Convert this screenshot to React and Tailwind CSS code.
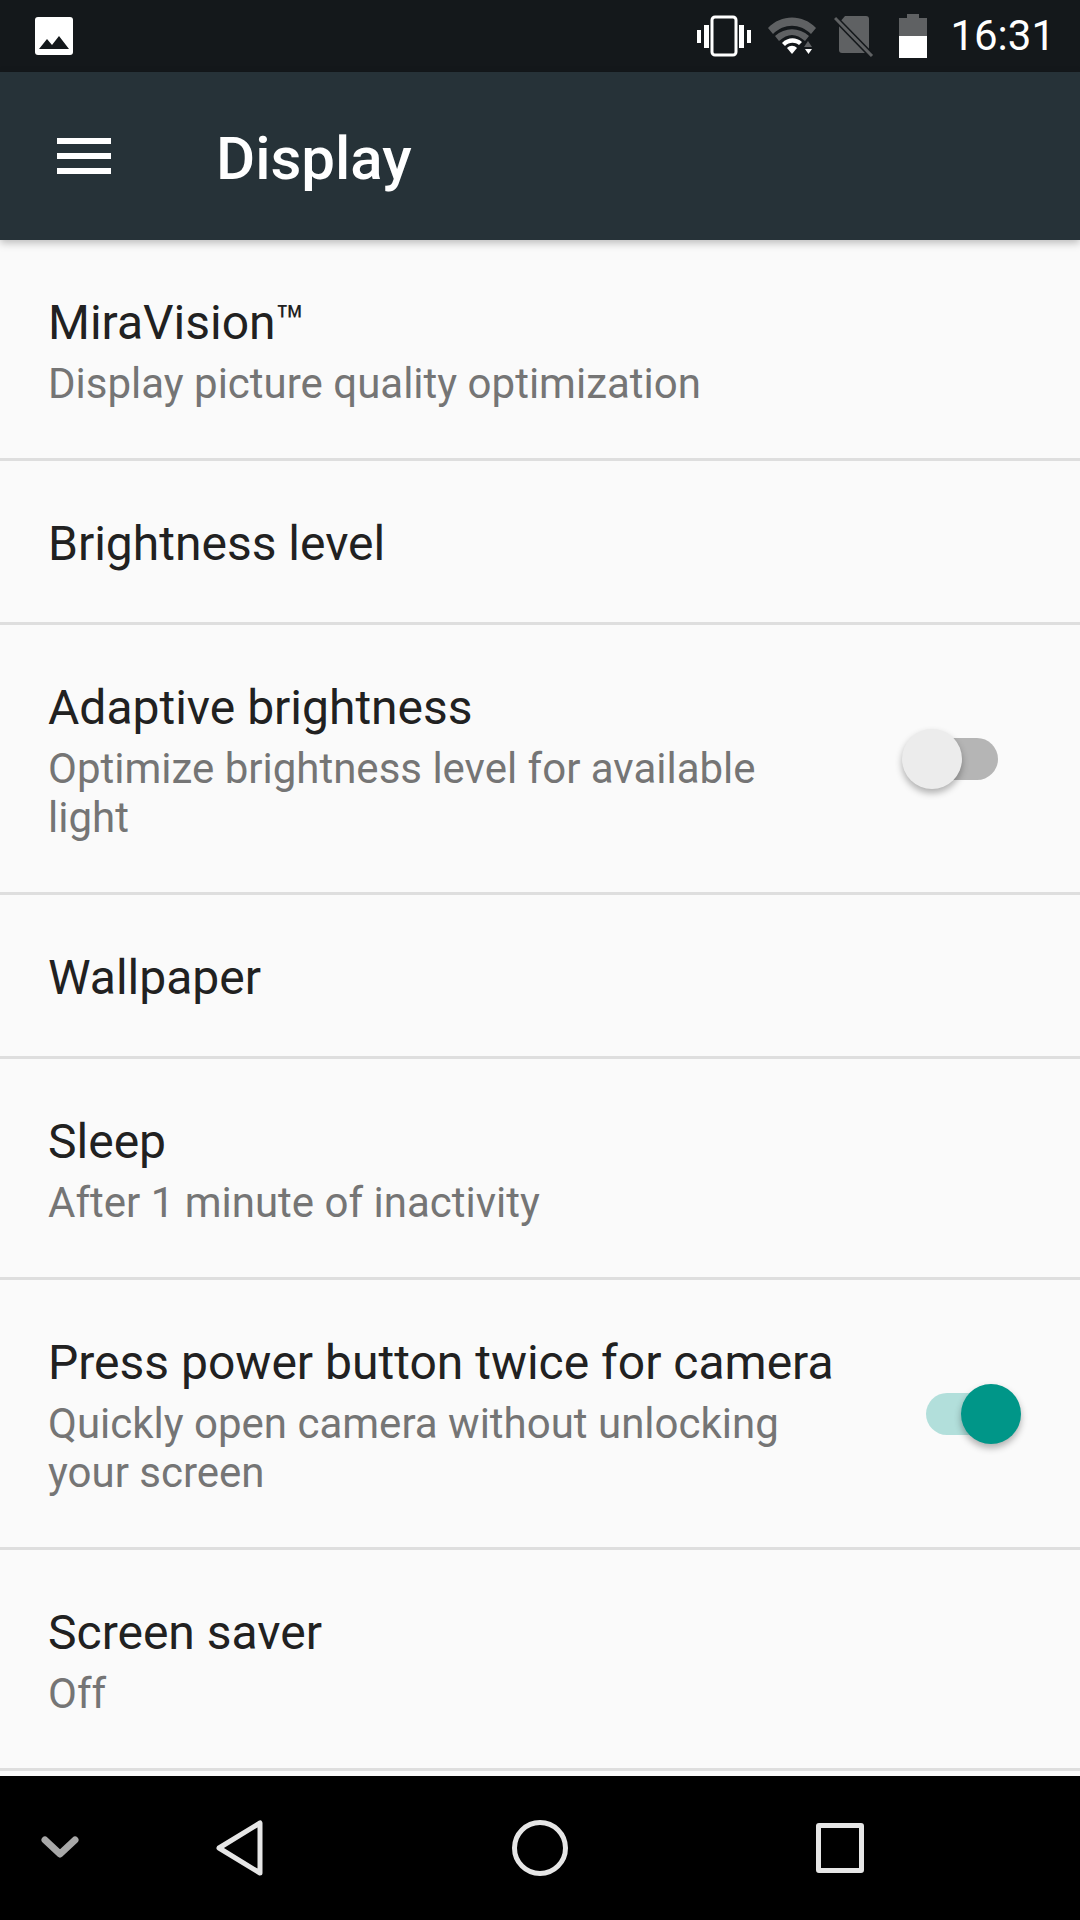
import React from "react";

const rows = [
  { title: "MiraVision™", sub: ["Display picture quality optimization"] },
  { title: "Brightness level" },
  { title: "Adaptive brightness", sub: ["Optimize brightness level for available", "light"], toggle: "off" },
  { title: "Wallpaper" },
  { title: "Sleep", sub: ["After 1 minute of inactivity"] },
  { title: "Press power button twice for camera", sub: ["Quickly open camera without unlocking", "your screen"], toggle: "on" },
  { title: "Screen saver", sub: ["Off"] },
];

function Toggle({ on }) {
  return (
    <div className="relative w-[120px] h-[60px] shrink-0">
      <div className={on ? "absolute left-[24px] top-[9px] w-[76px] h-[42px] rounded-full bg-[#b2dfdb]" : "absolute left-[20px] top-[9px] w-[76px] h-[42px] rounded-full bg-[#b5b5b5]"} />
      <div className={on ? "absolute left-[59px] top-0 w-[60px] h-[60px] rounded-full bg-[#009688] shadow-[0_4px_7px_rgba(0,0,0,0.3)]" : "absolute left-0 top-0 w-[60px] h-[60px] rounded-full bg-[#ececec] shadow-[0_4px_7px_rgba(0,0,0,0.3)]"} />
    </div>
  );
}

function Row({ row }) {
  const h = row.sub ? (row.sub.length > 1 ? "h-[270px]" : "h-[221px]") : "h-[164px]";
  return (
    <div className={`${h} shrink-0 flex items-center border-b-[3px] border-[#dedede] pl-[48px] pr-[58px]`}>
      <div className="flex-1 mt-[4px]">
        <div className="text-[48px] leading-[56px] text-[#212121]">{row.title}</div>
        {row.sub && (
          <div className="mt-[8px]">
            {row.sub.map((line) => (
              <div key={line} className="text-[42px] leading-[49px] text-[#757575]">{line}</div>
            ))}
          </div>
        )}
      </div>
      {row.toggle && <Toggle on={row.toggle === "on"} />}
    </div>
  );
}

export default function App() {
  return (
    <div className="w-[1080px] h-[1920px] flex flex-col bg-[#fafafa] overflow-hidden font-['Roboto',sans-serif]">
      {/* status bar */}
      <div className="h-[72px] shrink-0 bg-[#14181b] flex items-center pl-[35px]">
        <svg width="38" height="38" viewBox="0 0 38 38" className="mt-[-1px]">
          <rect width="38" height="38" rx="3" fill="#fff" />
          <path d="M4 32 L12 22 L17 28 L24 19 L34 32 Z" fill="#14181b" />
        </svg>
        <div className="flex-1" />
        <svg width="54" height="42" viewBox="0 0 54 42" className="mr-[17px]">
          <rect x="15" y="2" width="24" height="38" rx="3" fill="none" stroke="#fff" strokeWidth="3" />
          <rect x="0" y="15" width="4" height="13" fill="#fff" />
          <rect x="7" y="10" width="5" height="23" fill="#fff" />
          <rect x="42" y="10" width="5" height="23" fill="#fff" />
          <rect x="50" y="15" width="4" height="13" fill="#fff" />
        </svg>
        <svg width="48" height="38" viewBox="0 0 48 38" className="mr-[18px]">
          <path d="M0 11 C13 -3 35 -3 48 11 L43 17 C32 6 16 6 5 17 Z" fill="#5f6163" />
          <path d="M7 19 C17 10 31 10 41 19 L37 24 C28 16 20 16 11 24 Z" fill="#5f6163" />
          <path d="M14 26 C20 20 28 20 34 25 L31 28 C27 25 21 25 17 29 Z" fill="#fff" />
          <path d="M19 31 C22 28 26 28 29 31 L24 37 Z" fill="#fff" />
          <path d="M40 24 L44 30 L36 30 Z" fill="#5f6163" />
          <path d="M37 32 L44 32 L40.5 37 Z" fill="#fff" />
        </svg>
        <svg width="40" height="42" viewBox="0 0 40 42" className="mr-[25px]">
          <path d="M5 8 L11 1 H32 A3 3 0 0 1 35 4 V35 A3 3 0 0 1 32 38 H8 A3 3 0 0 1 5 35 Z" fill="#5f6163" />
          <path d="M1 3 L38 41" stroke="#14181b" strokeWidth="6" />
          <path d="M1 3 L38 41" stroke="#5f6163" strokeWidth="3" />
        </svg>
        <svg width="28" height="44" viewBox="0 0 28 44" className="mr-[23px]">
          <path d="M8 0 H20 V4 H28 V22 H0 V4 H8 Z" fill="#5f6163" />
          <rect x="0" y="22" width="28" height="22" fill="#fff" />
        </svg>
        <span className="text-[42px] text-white mr-[25px] leading-none">16:31</span>
      </div>

      {/* toolbar */}
      <div className="relative z-10 h-[168px] shrink-0 bg-[#263238] flex items-center pl-[57px] shadow-[0_3px_8px_rgba(0,0,0,0.25)]">
        <div className="w-[54px] flex flex-col gap-[9px]">
          <div className="h-[6px] bg-white" />
          <div className="h-[6px] bg-white" />
          <div className="h-[6px] bg-white" />
        </div>
        <span className="ml-[105px] text-[60px] font-medium text-white mt-[5px]">Display</span>
      </div>

      {/* settings list */}
      <div className="flex-1 min-h-0 overflow-hidden flex flex-col">
        {rows.map((row) => (
          <Row key={row.title} row={row} />
        ))}
      </div>

      {/* nav bar */}
      <div className="h-[144px] shrink-0 bg-black flex items-center">
        <div className="w-[116px] flex justify-center pl-[4px]">
          <svg width="38" height="25" viewBox="0 0 38 25">
            <path d="M4 4 L19 18 L34 4" fill="none" stroke="#a8a8a8" strokeWidth="7" strokeLinecap="round" strokeLinejoin="round" />
          </svg>
        </div>
        <div className="w-[248px] flex justify-center">
          <svg width="48" height="56" viewBox="0 0 48 56">
            <path d="M44 3 V53 L3 28 Z" fill="none" stroke="#e6e6e6" strokeWidth="5" strokeLinejoin="round" />
          </svg>
        </div>
        <div className="w-[352px] flex justify-center">
          <div className="w-[56px] h-[56px] rounded-full border-[5px] border-[#e6e6e6]" />
        </div>
        <div className="w-[248px] flex justify-center">
          <div className="w-[48px] h-[50px] rounded-[3px] border-[5px] border-[#e6e6e6]" />
        </div>
      </div>
    </div>
  );
}
